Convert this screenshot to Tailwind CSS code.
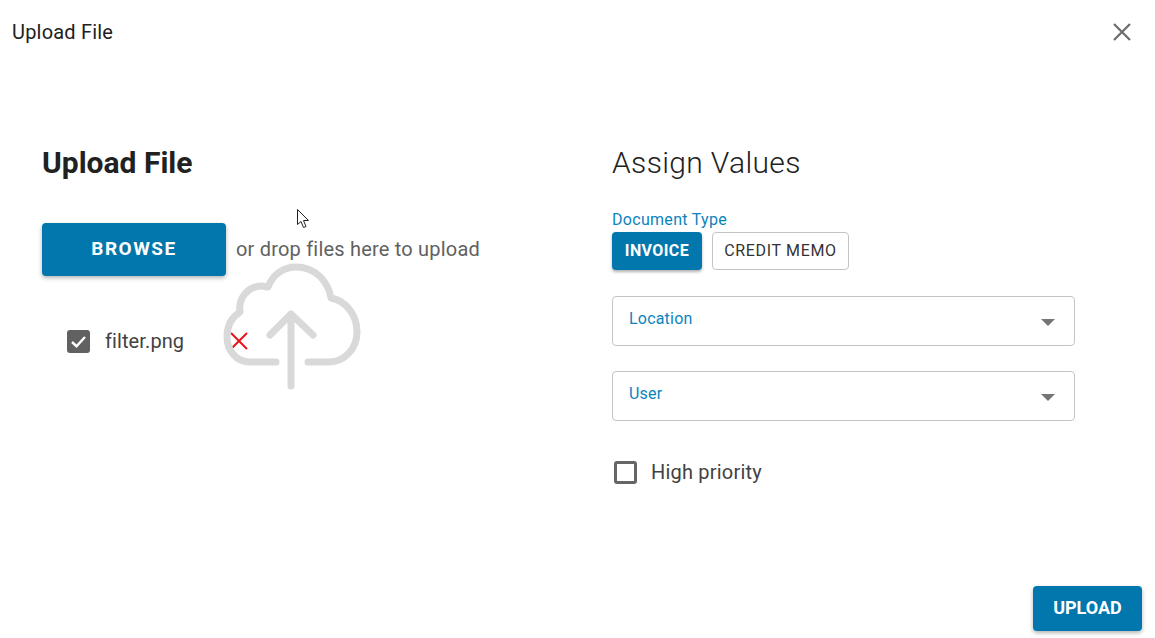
<!DOCTYPE html>
<html lang="en">
<head>
  <meta charset="UTF-8" />
  <title>Upload File</title>
  <script src="https://cdn.jsdelivr.net/npm/@tailwindcss/browser@4"></script>
</head>
<body class="bg-white font-['Roboto',sans-serif] text-[#212121] overflow-hidden">
  <div class="relative h-[638px] w-[1155px] flex flex-col">
    <header class="h-[64px] pl-3 pr-[21px] flex items-center justify-between">
      <h1 class="text-[20px] font-normal tracking-[0.2px]">Upload File</h1>
      <svg width="24" height="24" viewBox="0 0 24 24" fill="none" stroke="#6b6b6b" stroke-width="2.2">
        <path d="M4 4 L20 20 M20 4 L4 20" />
      </svg>
    </header>

    <main class="flex flex-1 pt-[80px] pl-[42px]">
      <section class="w-[570px]">
        <h2 class="text-[30px] leading-[38px] font-bold">Upload File</h2>
        <div class="mt-[41px] flex items-center gap-[10px]">
          <button class="w-[184px] h-[53px] rounded bg-[#0277ad] text-white text-[19px] font-bold tracking-[1.5px] shadow-[0_2px_4px_rgba(0,0,0,0.3)]">BROWSE</button>
          <span class="pb-[2px] text-[20px] tracking-[0.2px] text-[#616161]">or drop files here to upload</span>
        </div>
        <div class="mt-[50px] pl-[25px] flex items-center">
          <span class="w-[23px] h-[23px] rounded-[3px] bg-[#616161] flex items-center justify-center">
            <svg width="17" height="17" viewBox="0 0 17 17" fill="none" stroke="#fff" stroke-width="2.4">
              <path d="M2 9 L6.5 13.2 L15 4" />
            </svg>
          </span>
          <span class="ml-[15px] text-[20px] tracking-[0.1px] text-[#424242]">filter.png</span>
          <svg class="ml-[45px]" width="20" height="20" viewBox="0 0 20 20" fill="none" stroke="#e8141c" stroke-width="2">
            <path d="M2 2 L18 18 M18 2 L2 18" />
          </svg>
        </div>
      </section>

      <section class="w-[463px]">
        <h2 class="text-[30px] leading-[38px] font-light tracking-[0.35px]">Assign Values</h2>
        <div class="mt-[29px] text-[16px] leading-[18px] tracking-[0.3px] text-[#0c84bd]">Document Type</div>
        <div class="mt-[3px] flex gap-[10px]">
          <button class="w-[90px] h-[38px] rounded bg-[#0277ad] text-white text-[16px] font-bold tracking-[0.4px] shadow-[0_2px_3px_rgba(0,0,0,0.3)]">INVOICE</button>
          <button class="w-[137px] h-[38px] rounded border border-[#c4c4c4] text-[16px] font-normal text-[#333] tracking-[0.65px]">CREDIT MEMO</button>
        </div>
        <div class="mt-[26px] h-[50px] rounded border border-[#c4c4c4] pl-[16px] pr-[19px] flex items-start justify-between">
          <span class="mt-[13px] text-[16px] leading-[18px] text-[#0c84bd] tracking-[0.2px]">Location</span>
          <span class="mt-[22px] w-0 h-0 border-x-[7px] border-x-transparent border-t-[7px] border-t-[#757575]"></span>
        </div>
        <div class="mt-[25px] h-[50px] rounded border border-[#c4c4c4] pl-[16px] pr-[19px] flex items-start justify-between">
          <span class="mt-[13px] text-[16px] leading-[18px] text-[#0c84bd] tracking-[0.2px]">User</span>
          <span class="mt-[22px] w-0 h-0 border-x-[7px] border-x-transparent border-t-[7px] border-t-[#757575]"></span>
        </div>
        <div class="mt-[36px] pl-[2px] flex items-center">
          <span class="w-[23px] h-[23px] rounded-[3px] border-[3px] border-[#666]"></span>
          <span class="ml-[14px] text-[20px] tracking-[0.2px] text-[#424242]">High priority</span>
        </div>
      </section>
    </main>

    <footer class="pr-[13px] pb-[7px] flex justify-end">
      <button class="w-[109px] h-[45px] pb-[2px] rounded bg-[#0277ad] text-white text-[18px] font-bold shadow-[0_2px_4px_rgba(0,0,0,0.3)]">UPLOAD</button>
    </footer>

    <!-- drop zone cloud sits over the file row -->
    <svg class="absolute left-[220px] top-[260px]" width="145" height="133" viewBox="220 260 145 133" fill="none" stroke="#d9d9d9" stroke-width="7" stroke-linecap="round" stroke-linejoin="round">
      <path d="M276 362 H250 C236 362 227 350 227 337 C227 326 232 317 240 312 C238 298 248 286 262 286 C264 286 266 287 268 287 C273 274 284 267 296 267 C314 267 328 280 331 298 C347 301 357 316 357 332 C357 349 344 362 329 362 H308" />
      <path d="M291 386 V314 M270 335 L291 314 L313 335" />
    </svg>

    <!-- mouse pointer -->
    <svg class="absolute left-[297px] top-[209px]" width="13" height="20" viewBox="0 0 13 20" fill="#fff" stroke="#222" stroke-width="1">
      <path d="M0.5 0.5 V15.5 L4 12.5 L6.5 18.5 L9 17.5 L6.5 11.5 L11.5 11.5 Z" />
    </svg>
  </div>
</body>
</html>
